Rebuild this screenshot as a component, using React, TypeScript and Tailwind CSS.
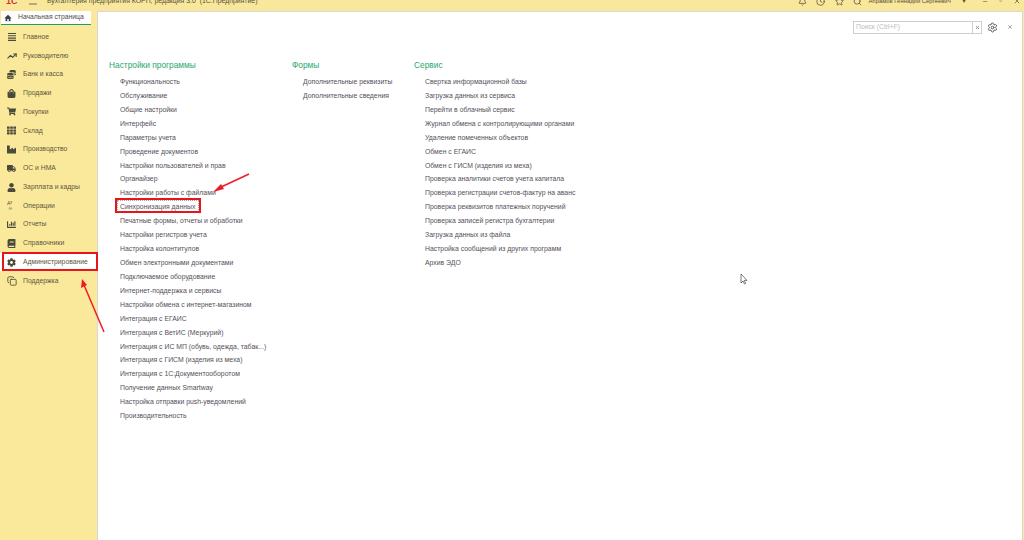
import { FaBook, FaChartBar, FaCoins, FaCog, FaIndustry, FaShoppingBag, FaShoppingCart, FaTh, FaTruck, FaUser } from "react-icons/fa";
import { Bell, Clock, Copy, Search, Settings, Star, TrendingUp, X } from "lucide-react";
import type { ReactNode } from "react";

type NavItem = {
	icon: ReactNode;
	label: string;
	active?: boolean;
};

const iconClass = "h-[9px] w-[9px] text-[#4a4a3a]";

const navItems: Array<NavItem> = [
	{
		icon: (
			<svg viewBox="0 0 10 10" className="h-[10px] w-[10px] text-[#4a4a3a]">
				<path d="M1 1.5h8M1 3.8h8M1 6.1h8M1 8.4h8" stroke="currentColor" strokeWidth="1.1" />
			</svg>
		),
		label: "Главное",
	},
	{ icon: <TrendingUp className="h-[10px] w-[10px] text-[#4a4a3a]" strokeWidth={2.6} />, label: "Руководителю" },
	{ icon: <FaCoins className={iconClass} />, label: "Банк и касса" },
	{ icon: <FaShoppingBag className={iconClass} />, label: "Продажи" },
	{ icon: <FaShoppingCart className={iconClass} />, label: "Покупки" },
	{ icon: <FaTh className={iconClass} />, label: "Склад" },
	{ icon: <FaIndustry className={iconClass} />, label: "Производство" },
	{ icon: <FaTruck className={iconClass} />, label: "ОС и НМА" },
	{ icon: <FaUser className={iconClass} />, label: "Зарплата и кадры" },
	{
		icon: <span className="text-[5px] leading-[5px] text-[#4a4a3a]">A<sup>y</sup><br />&nbsp;∞</span>,
		label: "Операции",
	},
	{ icon: <FaChartBar className={iconClass} />, label: "Отчеты" },
	{ icon: <FaBook className={iconClass} />, label: "Справочники" },
	{ icon: <FaCog className={iconClass} />, label: "Администрирование", active: true },
	{ icon: <Copy className="h-[10px] w-[10px] text-[#4a4a3a]" strokeWidth={2} />, label: "Поддержка" },
];

const settingsLinks = [
	"Функциональность",
	"Обслуживание",
	"Общие настройки",
	"Интерфейс",
	"Параметры учета",
	"Проведение документов",
	"Настройки пользователей и прав",
	"Органайзер",
	"Настройки работы с файлами",
	"Синхронизация данных",
	"Печатные формы, отчеты и обработки",
	"Настройки регистров учета",
	"Настройка колонтитулов",
	"Обмен электронными документами",
	"Подключаемое оборудование",
	"Интернет-поддержка и сервисы",
	"Настройки обмена с интернет-магазином",
	"Интеграция с ЕГАИС",
	"Интеграция с ВетИС (Меркурий)",
	"Интеграция с ИС МП (обувь, одежда, табак...)",
	"Интеграция с ГИСМ (изделия из меха)",
	"Интеграция с 1С:Документооборотом",
	"Получение данных Smartway",
	"Настройка отправки push-уведомлений",
	"Производительность",
];

const formLinks = ["Дополнительные реквизиты", "Дополнительные сведения"];

const serviceLinks = [
	"Свертка информационной базы",
	"Загрузка данных из сервиса",
	"Перейти в облачный сервис",
	"Журнал обмена с контролирующими органами",
	"Удаление помеченных объектов",
	"Обмен с ЕГАИС",
	"Обмен с ГИСМ (изделия из меха)",
	"Проверка аналитики счетов учета капитала",
	"Проверка регистрации счетов-фактур на аванс",
	"Проверка реквизитов платежных поручений",
	"Проверка записей регистра бухгалтерии",
	"Загрузка данных из файла",
	"Настройка сообщений из других программ",
	"Архив ЭДО",
];

const LinkColumn = ({ title, links, width }: { title: string; links: Array<string>; width: string }) => (
	<section className={`flex shrink-0 flex-col ${width}`}>
		<h2 className="h-[12px] text-[8.35px] leading-[12px] font-normal text-[#2aa86c]">{title}</h2>
		<ul className="mt-[4px] flex flex-col pl-[11px]">
			{links.map((link) => (
				<li key={link} className="h-[13.93px] text-[6.87px] leading-[13.93px] whitespace-nowrap text-[#55505a]">
					{link === "Синхронизация данных" ? (
						<span className="relative">
							{link}
							<span className="absolute top-[-3.5px] left-[-3px] h-[12px] w-[82px] border border-dotted border-[#a8a8a8]" />
							<span className="absolute top-[-5px] left-[-5px] h-[15px] w-[86px] border-2 border-[#e8141c]" />
						</span>
					) : (
						link
					)}
				</li>
			))}
		</ul>
	</section>
);

export default function App() {
	return (
		<div className="relative flex h-[540px] w-[1024px] flex-col overflow-hidden bg-[#fbe99b] font-['Liberation_Sans',Arial,sans-serif]">
			<header className="h-[11px] shrink-0 overflow-hidden bg-[#f9e79c] text-[#55503a]">
				<div className="mt-[-6px] flex h-[14px] w-full items-center">
					<span className="ml-[6px] w-[18px] text-[9px] leading-none font-bold text-[#d0342c]">1С</span>
					<svg viewBox="0 0 10 8" className="ml-[4px] h-[8px] w-[10px]">
						<path d="M1 1h8M1 7h8" stroke="currentColor" strokeWidth="0.8" />
					</svg>
					<span className="ml-[9px] text-[6.9px] whitespace-pre">Бухгалтерия предприятия КОРП, редакция 3.0  (1С:Предприятие)</span>
					<div className="ml-auto flex items-center">
						<Bell className="h-[9px] w-[9px]" />
						<Clock className="ml-[9px] h-[9px] w-[9px]" />
						<Star className="ml-[10px] h-[9px] w-[9px]" />
						<Search className="ml-[9px] h-[9px] w-[9px]" />
						<span className="ml-[6px] text-[5.9px]">Абрамов Геннадий Сергеевич</span>
						<span className="ml-[11px] text-[8px]">▾</span>
						<span className="ml-[17px] text-[8px]">–</span>
						<span className="ml-[12px] text-[8px]">▫</span>
						<X className="mr-[3px] ml-[11px] h-[8px] w-[8px]" />
					</div>
				</div>
			</header>
			<div className="flex min-h-0 flex-1">
				<aside className="flex w-[97px] shrink-0 flex-col bg-[#fbe99b]">
					<div className="flex h-[16.5px] shrink-0 items-start pl-[1px]">
						<div className="flex h-[14px] w-[90px] items-center border-b border-[#1f9d63] bg-white pl-[3px] text-[6.8px] text-[#4f4a52]">
							<svg viewBox="0 0 10 10" className="h-[8px] w-[8px] text-[#3c4048]">
								<path d="M5 1 0.5 5.4h1.4V9h2.2V6.4h1.8V9h2.2V5.4h1.4z" fill="currentColor" />
							</svg>
							<span className="ml-[6px]">Начальная страница</span>
						</div>
					</div>
					<nav className="flex flex-col">
						{navItems.map((item) => (
							<div
								key={item.label}
								className={`relative flex h-[18.77px] items-center pl-[7px] text-[6.8px] text-[#5b563f] ${item.active ? "bg-white" : ""}`}
							>
								<span className="flex w-[16px] justify-start">{item.icon}</span>
								{item.label}
								{item.active ? <span className="absolute top-[-0.5px] left-[2px] h-[18.5px] w-[96px] border-2 border-[#e8141c]" /> : null}
							</div>
						))}
					</nav>
				</aside>
				<main className="mr-[1px] flex min-w-0 flex-1 flex-col border-t border-r border-l border-[#d8d8d8] bg-white">
					<div className="flex h-[30px] shrink-0 items-start justify-end pt-[9px] pr-[9px]">
						<div className="flex h-[13px] w-[129px] items-center border border-[#cfcfcf] pl-[2px] text-[6.8px] text-[#bdbdbd]">
							<span className="flex-1">Поиск (Ctrl+F)</span>
							<span className="flex h-full w-[9px] items-center justify-center border-l border-[#cfcfcf] text-[#888888]">
								<X className="h-[5px] w-[5px]" strokeWidth={4} />
							</span>
						</div>
						<Settings className="mt-[1px] ml-[5px] h-[11px] w-[11px] text-[#555555]" />
						<X className="mt-[3px] ml-[9px] h-[6px] w-[6px] text-[#888888]" strokeWidth={3} />
					</div>
					<div className="flex pt-[17px] pl-[11px]">
						<LinkColumn title="Настройки программы" links={settingsLinks} width="w-[183px]" />
						<LinkColumn title="Формы" links={formLinks} width="w-[122px]" />
						<LinkColumn title="Сервис" links={serviceLinks} width="w-[200px]" />
					</div>
				</main>
			</div>
			<svg viewBox="0 0 1024 540" className="pointer-events-none absolute inset-0 h-[540px] w-[1024px]">
				<path d="M249 174 219 188" stroke="#ee1c25" strokeWidth="1.5" />
				<path d="M213 192 221 184 224 189z" fill="#ee1c25" />
				<path d="M104 332 84 285" stroke="#ee1c25" strokeWidth="1.5" />
				<path d="M82 279 87 285 81 288z" fill="#ee1c25" />
				<path d="M741 274v9l2-2 1.500 3 1.200-.6-1.500-3h2.800z" fill="white" stroke="#444444" strokeWidth="0.7" />
			</svg>
		</div>
	);
}
